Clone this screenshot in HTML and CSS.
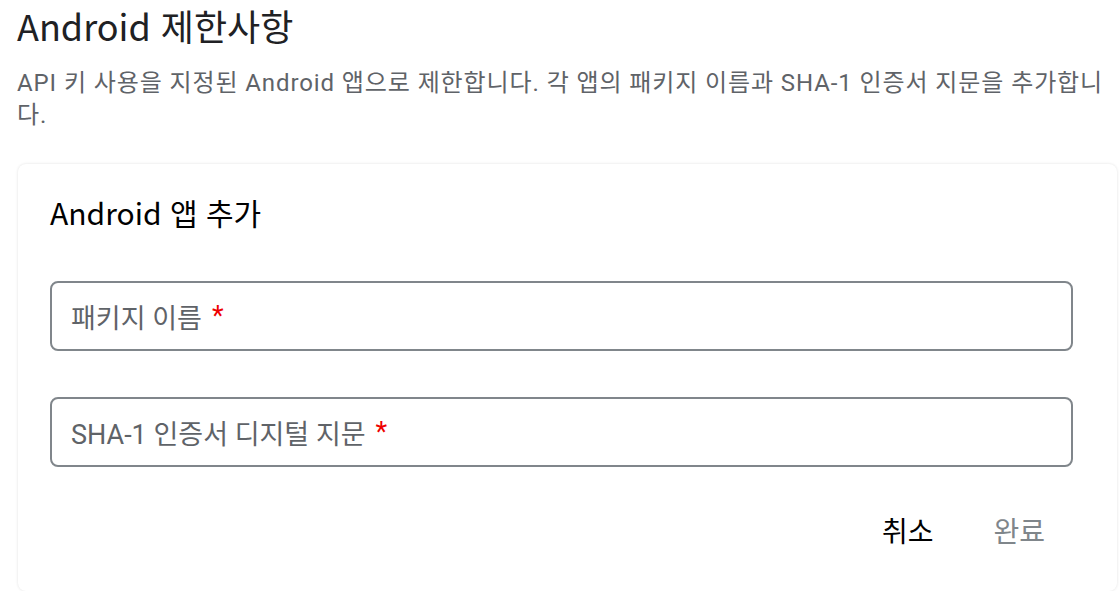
FILE: index.html
```html
<!DOCTYPE html>
<html lang="ko">
<head>
    <meta charset="UTF-8">
    <meta name="viewport" content="width=device-width, initial-scale=1.0">
    <link rel="stylesheet" href="styles.css">
</head>
<body>
    <div id="page">
        <h1 class="page-title">Android 제한사항</h1>
        <p class="page-desc">API 키 사용을 지정된 Android 앱으로 제한합니다. 각 앱의 패키지 이름과 SHA-1 인증서 지문을 추가합니다.</p>

        <div class="card">
            <h2 class="card-title">Android 앱 추가</h2>
            <div class="field">
                <span class="field-label">패키지 이름</span><span class="req">*</span>
            </div>
            <div class="field">
                <span class="field-label">SHA-1 인증서 디지털 지문</span><span class="req">*</span>
            </div>
            <div class="actions">
                <button class="btn btn-cancel">취소</button>
                <button class="btn btn-done" disabled>완료</button>
            </div>
        </div>
    </div>
</body>
</html>
```

FILE: styles.css
```css
body {
    margin: 0;
    background: #fff;
    font-family: Roboto, "Noto Sans CJK KR", sans-serif;
    overflow: hidden;
}
#page {
    padding: 4px 2px 0 17px;
}
.page-title {
    margin: 0;
    font-size: 36px;
    font-weight: 400;
    line-height: 42px;
    color: #202124;
    font-family: "Noto Sans CJK KR", sans-serif;
}
.page-desc {
    margin: 21px 0 0;
    font-size: 24px;
    line-height: 32px;
    letter-spacing: 0.9px;
    color: #5f6368;
}
.card {
    margin-top: 33px;
    margin-left: 1px;
    padding: 28px 44px 0 32px;
    height: 399px;
    border-radius: 8px;
    box-shadow: 0 0 3px rgba(0, 0, 0, 0.12);
    background: #fff;
}
.card-title {
    margin: 0 0 49px;
    font-size: 30px;
    font-weight: 400;
    line-height: 40px;
    color: #000;
    font-family: "Noto Sans CJK KR", sans-serif;
}
.field {
    height: 66px;
    border: 2px solid #80868b;
    border-radius: 8px;
    padding: 0 19px;
    display: flex;
    align-items: center;
    font-size: 27px;
    color: #5f6368;
    margin-bottom: 46px;
}
.req {
    color: #e00;
    margin-left: 10px;
    font-size: 27px;
}
.actions {
    display: flex;
    justify-content: flex-end;
    gap: 12px;
    margin-top: -11px;
    margin-right: 4px;
}
.btn {
    background: none;
    border: none;
    padding: 8px 24px;
    font-size: 28px;
    font-family: "Noto Sans CJK KR", sans-serif;
    cursor: pointer;
}
.btn-cancel {
    color: #000;
}
.btn-done {
    color: #80868b;
}
```
